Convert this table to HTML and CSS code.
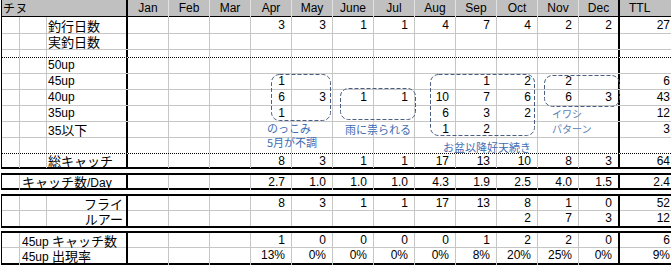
FILE: index.html
```html
<!DOCTYPE html>
<html lang="ja">
<head>
<meta charset="utf-8">
<title>チヌ</title>
<link rel="stylesheet" href="styles.css">
</head>
<body>
<div class="sheet">
  <div class="box boxa">
    <div class="row head">
      <span class="lab full"><span class="jp title">チヌ</span></span><span>Jan</span><span>Feb</span><span>Mar</span><span>Apr</span><span>May</span><span>June</span><span>Jul</span><span>Aug</span><span>Sep</span><span>Oct</span><span>Nov</span><span class="dec">Dec</span><span class="ttl">TTL</span>
    </div>
    <div class="row r1">
      <span></span><span></span><span class="lab jp">釣行日数</span><span></span><span></span><span></span><span>3</span><span>3</span><span>1</span><span>1</span><span>4</span><span>7</span><span>4</span><span>2</span><span class="dec">2</span><span class="ttl">27</span>
    </div>
    <div class="row">
      <span></span><span></span><span class="lab jp">実釣日数</span><span></span><span></span><span></span><span></span><span></span><span></span><span></span><span></span><span></span><span></span><span></span><span class="dec"></span><span class="ttl"></span>
    </div>
    <div class="row short dot">
      <span></span><span></span><span class="lab"></span><span></span><span></span><span></span><span></span><span></span><span></span><span></span><span></span><span></span><span></span><span></span><span class="dec"></span><span class="ttl"></span>
    </div>
    <div class="row">
      <span></span><span></span><span class="lab">50up</span><span></span><span></span><span></span><span></span><span></span><span></span><span></span><span></span><span></span><span></span><span></span><span class="dec"></span><span class="ttl"></span>
    </div>
    <div class="row">
      <span></span><span></span><span class="lab">45up</span><span></span><span></span><span></span><span>1</span><span></span><span></span><span></span><span></span><span>1</span><span>2</span><span>2</span><span class="dec"></span><span class="ttl">6</span>
    </div>
    <div class="row">
      <span></span><span></span><span class="lab">40up</span><span></span><span></span><span></span><span>6</span><span>3</span><span>1</span><span>1</span><span>10</span><span>7</span><span>6</span><span>6</span><span class="dec">3</span><span class="ttl">43</span>
    </div>
    <div class="row">
      <span></span><span></span><span class="lab">35up</span><span></span><span></span><span></span><span>1</span><span></span><span></span><span></span><span>6</span><span>3</span><span>2</span><span></span><span class="dec"></span><span class="ttl">12</span>
    </div>
    <div class="row">
      <span></span><span></span><span class="lab">35<span class="jp">以下</span></span><span></span><span></span><span></span><span></span><span></span><span></span><span></span><span>1</span><span>2</span><span></span><span></span><span class="dec"></span><span class="ttl">3</span>
    </div>
    <div class="row dot">
      <span></span><span></span><span class="lab"></span><span></span><span></span><span></span><span></span><span></span><span></span><span></span><span></span><span></span><span></span><span></span><span class="dec"></span><span class="ttl"></span>
    </div>
    <div class="row last">
      <span></span><span></span><span class="lab jp">総キャッチ</span><span></span><span></span><span></span><span>8</span><span>3</span><span>1</span><span>1</span><span>17</span><span>13</span><span>10</span><span>8</span><span class="dec">3</span><span class="ttl">64</span>
    </div>
  </div>

  <div class="box boxb">
    <div class="row last">
      <span></span><span class="lab wide"><span class="jp">キャッチ数</span>/Day</span><span></span><span></span><span></span><span>2.7</span><span>1.0</span><span>1.0</span><span>1.0</span><span>4.3</span><span>1.9</span><span>2.5</span><span>4.0</span><span class="dec">1.5</span><span class="ttl">2.4</span>
    </div>
  </div>

  <div class="box boxc">
    <div class="row">
      <span></span><span></span><span class="lab right jp">フライ</span><span></span><span></span><span></span><span>8</span><span>3</span><span>1</span><span>1</span><span>17</span><span>13</span><span>8</span><span>1</span><span class="dec">0</span><span class="ttl">52</span>
    </div>
    <div class="row last">
      <span></span><span></span><span class="lab right jp">ルアー</span><span></span><span></span><span></span><span></span><span></span><span></span><span></span><span></span><span></span><span>2</span><span>7</span><span class="dec">3</span><span class="ttl">12</span>
    </div>
  </div>

  <div class="box boxd">
    <div class="row">
      <span></span><span class="lab wide">45up <span class="jp">キャッチ数</span></span><span></span><span></span><span></span><span>1</span><span>0</span><span>0</span><span>0</span><span>0</span><span>1</span><span>2</span><span>2</span><span class="dec">0</span><span class="ttl">6</span>
    </div>
    <div class="row last">
      <span></span><span class="lab wide">45up <span class="jp">出現率</span></span><span></span><span></span><span></span><span>13%</span><span>0%</span><span>0%</span><span>0%</span><span>0%</span><span>8%</span><span>20%</span><span>25%</span><span class="dec">0%</span><span class="ttl">9%</span>
    </div>
  </div>
</div>

<svg class="marks" width="671" height="265" viewBox="0 0 671 265">
  <rect x="271.5" y="74.5" width="59" height="46" rx="8" ry="8"/>
  <rect x="340.5" y="88.5" width="75" height="31" rx="8" ry="8"/>
  <rect x="430.5" y="74.5" width="104" height="61" rx="8" ry="8"/>
  <rect x="544.5" y="75.5" width="75" height="31" rx="8" ry="8"/>
</svg>

<div class="note n1">のっこみ<br>5月が不調</div>
<div class="note n2">雨に祟られる</div>
<div class="note n3">お盆以降好天続き</div>
<div class="note n4 small">イワシ<br>パターン</div>
</body>
</html>
```

FILE: styles.css
```css
* {
  box-sizing: border-box;
  margin: 0;
  padding: 0;
}

body {
  margin: 0;
  width: 671px;
  height: 265px;
  overflow: hidden;
  position: relative;
  background: #ffffff;
  color: #000000;
  font-family: "Liberation Sans", "Noto Sans CJK JP", sans-serif;
  font-size: 12px;
}

.jp {
  font-family: "Noto Sans CJK JP", sans-serif;
  font-size: 13px;
}

.jp.title {
  font-size: 12px;
  letter-spacing: 0.5px;
}

.sheet {
  display: flex;
  flex-direction: column;
  gap: 4px;
}

.box {
  margin-left: 1px;
  border-left: 1px solid #000000;
  border-bottom: 2px solid #000000;
}

.boxb,
.boxc,
.boxd {
  border-top: 2px solid #000000;
}

.boxd {
  margin-top: -1px;
}

.row {
  display: grid;
  grid-template-columns: 18px 27px 81px repeat(12, 41px) 51px;
  height: 16px;
  line-height: 15px;
  border-bottom: 1px solid #c6c6c6;
}

.row > span {
  border-right: 1px solid #c6c6c6;
  text-align: right;
  padding-right: 6px;
  white-space: nowrap;
}

.row > .lab {
  border-right: 2px solid #000000;
  text-align: left;
  padding-left: 1px;
  padding-right: 0;
}

.row > .lab.wide {
  grid-column: 2 / 4;
  padding-left: 2px;
}

.row > .lab.full {
  grid-column: 1 / 4;
  padding-left: 1px;
}

.row > .lab.right {
  text-align: right;
  padding-right: 3px;
}

.row > .dec {
  border-right: 2px solid #000000;
}

.row > .ttl {
  border-right: none;
  padding-right: 1px;
}

.head {
  height: 17px;
  line-height: 16px;
  background: #c0c0c0;
  border-bottom: 1px solid #000000;
}

.head > span {
  text-align: center;
  padding-right: 0;
  border-right-color: #e2e2e2;
}

.head > .ttl {
  text-align: left;
  padding-left: 9px;
}

.r1 {
  height: 17px;
  line-height: 17px;
}

.short {
  height: 8px;
  line-height: 7px;
}

.dot {
  border-bottom: 1px dotted #000000;
}

.boxa .last {
  height: 13px;
  line-height: 14px;
  border-bottom: none;
}

.boxb .last {
  height: 13px;
  line-height: 14px;
  border-bottom: none;
}

.boxc .row {
  height: 15px;
  line-height: 15px;
}

.boxc .last {
  border-bottom: none;
}

.boxd .row {
  height: 15px;
  line-height: 15px;
}

.boxd .last {
  border-bottom: none;
}

.marks {
  position: absolute;
  left: 0;
  top: 0;
  pointer-events: none;
}

.marks rect {
  fill: none;
  stroke: #4a5d80;
  stroke-width: 1;
  stroke-dasharray: 4 2;
}

.note {
  position: absolute;
  color: #3d6db3;
  font-family: "Noto Sans CJK JP", sans-serif;
  font-size: 11px;
  line-height: 14px;
  white-space: nowrap;
}

.note.small {
  font-size: 10px;
  line-height: 15px;
  color: #5a80b8;
}

.n1 {
  left: 267px;
  top: 121px;
}

.n2 {
  left: 345px;
  top: 122px;
}

.n3 {
  left: 443px;
  top: 140px;
}

.n4 {
  left: 552px;
  top: 106px;
}
```
